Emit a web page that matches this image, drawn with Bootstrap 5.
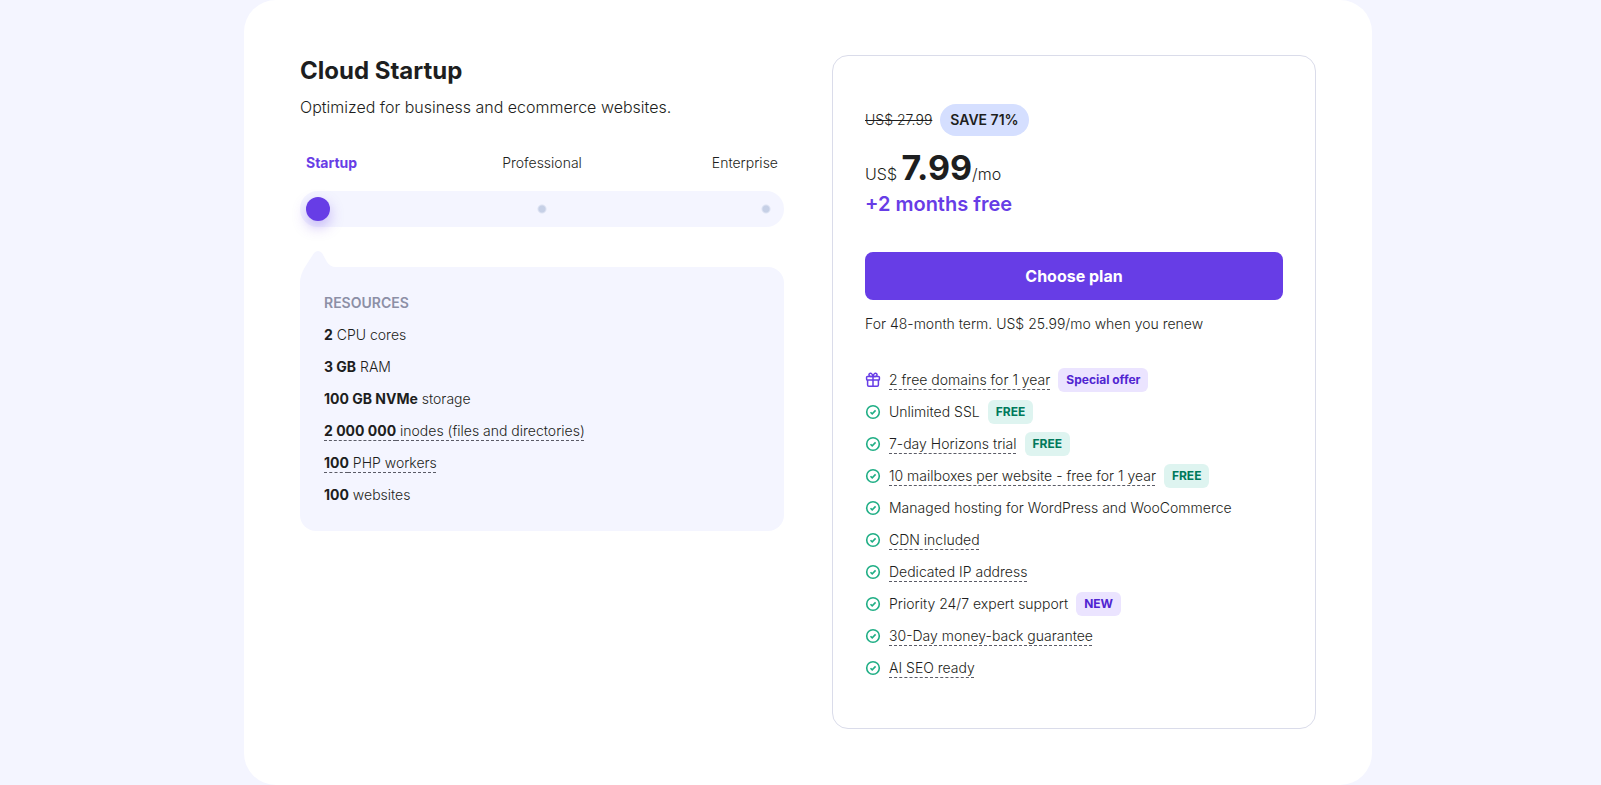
<!DOCTYPE html>
<html lang="en">
<head>
<meta charset="utf-8">
<meta name="viewport" content="width=device-width, initial-scale=1">
<title>Cloud Startup plan</title>
<link href="https://cdn.jsdelivr.net/npm/bootstrap@5.3.0/dist/css/bootstrap.min.css" rel="stylesheet">
<style>
  :root { --brand: #673de6; --ink: #1d1e20; --mist: #f4f5ff; --dot: #c6d0e6; }
  body { font-family: Inter, "Open Sans", sans-serif; font-size: 14px; font-weight: 300; line-height: 24px; color: var(--ink); background: var(--mist); }
  b { font-weight: 700; }
  .page-shell { padding-left: 15px; }
  .plan-panel { max-width: 1128px; min-height: 100vh; padding: 55px 56px 56px; border-radius: 32px; background: #fff; }
  .plan-title { font-size: 24px; line-height: 32px; }
  .fs-16 { font-size: 16px; }
  .text-brand { color: var(--brand); }

  .tiers { margin-top: 32px; padding: 0 6px; }
  .tiers > * { flex: 1; }
  .tier-range { -webkit-appearance: none; appearance: none; display: block; width: 100%; height: 36px; padding: 6px; margin: 0; border-radius: 18px;
    background: radial-gradient(circle, var(--dot) 3px, transparent 5px) center / 10px 10px no-repeat,
                radial-gradient(circle, var(--dot) 3px, transparent 5px) right 13px center / 10px 10px no-repeat, var(--mist); }
  .tier-range::-webkit-slider-thumb { -webkit-appearance: none; width: 24px; height: 24px; border-radius: 50%; background: var(--brand); box-shadow: 0 6px 14px rgba(103, 61, 230, .35); }
  .tier-range::-moz-range-thumb { width: 24px; height: 24px; border: 0; border-radius: 50%; background: var(--brand); }

  .resources { position: relative; margin-top: 40px; padding: 24px; border-radius: 16px; background: var(--mist); }
  .resources-tip { position: absolute; left: 0; top: -16px; }
  .resources h2 { font-size: 14px; line-height: 24px; color: #8c8fa6; }
  .hint { text-decoration: underline dashed 1px #5a5b66; text-underline-offset: 4px; text-decoration-skip-ink: none; cursor: help; }

  .price-card { padding: 48px 32px; border: 1px solid #dadcea; border-radius: 16px; }
  .save-pill { padding: 4px 10px; border-radius: 16px; background: #d5dfff; }
  .price-line { font-size: 16px; line-height: 24px; }
  .price-value { font-size: 34px; line-height: 48px; }
  .bonus { font-size: 20px; line-height: 24px; }
  .btn-plan { --bs-btn-color: #fff; --bs-btn-bg: #673de6; --bs-btn-hover-color: #fff; --bs-btn-hover-bg: #5025d1; --bs-btn-active-color: #fff; --bs-btn-active-bg: #5025d1;
    --bs-btn-font-size: 16px; --bs-btn-font-weight: 700; --bs-btn-line-height: 24px; --bs-btn-border-radius: 8px; --bs-btn-border-width: 0; --bs-btn-padding-y: 12px; margin-top: 36px; }
  .term { margin: 12px 0 32px; }
  .tag { padding: 0 8px; border-radius: 6px; font-size: 12px; }
  .tag-violet { color: #5025d1; background: #ebe4ff; }
  .tag-green { color: #00795b; background: #def4f0; }
</style>
</head>
<body>
<svg class="d-none" xmlns="http://www.w3.org/2000/svg">
  <symbol id="check" viewBox="0 0 16 16">
    <circle cx="8" cy="8" r="6.3" fill="none" stroke="#1fae85" stroke-width="1.6"/>
    <path d="M5.5 8.2 7.2 9.900 10.600 6.400" fill="none" stroke="#1fae85" stroke-width="1.6"/>
  </symbol>
  <symbol id="gift" viewBox="0 0 16 16">
    <g fill="none" stroke="#673de6" stroke-width="1.500" stroke-linejoin="round">
      <rect x="1.600" y="4.400" width="12.800" height="3.600" rx=".8"/>
      <path d="M2.600 8v5a1.200 1.200 0 0 0 1.200 1.200h8.400a1.200 1.200 0 0 0 1.200-1.200V8M8 4.400v9.800M8 4.400H5.400a1.600 1.600 0 1 1 1.300-2.700C7.500 2.400 8 4.400 8 4.400s.5-2 1.300-2.700a1.600 1.600 0 1 1 1.300 2.700z"/>
    </g>
  </symbol>
</svg>
<div class="page-shell">
  <main class="plan-panel mx-auto">
    <div class="row gx-5">
      <section class="col-6">
        <h1 class="plan-title fw-bold mb-2">Cloud Startup</h1>
        <p class="fs-16 mb-0">Optimized for business and ecommerce websites.</p>
        <div class="tiers d-flex mb-3">
          <span class="text-brand fw-bold">Startup</span>
          <span class="text-center">Professional</span>
          <span class="text-end">Enterprise</span>
        </div>
        <input class="tier-range" type="range" min="0" max="2" step="1" value="0" aria-label="Plan size">
        <div class="resources">
          <svg class="resources-tip" width="36" height="32" viewBox="0 0 36 32"><path d="M0 32Q0 24 5 16L14 2Q18-2 22 2L27 11Q30 16 36 16V32Z" fill="#f4f5ff"/></svg>
          <h2 class="fw-semibold mb-2">RESOURCES</h2>
          <ul class="list-unstyled d-grid gap-2 mb-0">
            <li><b>2</b> CPU cores</li>
            <li><b>3 GB</b> RAM</li>
            <li><b>100 GB NVMe</b> storage</li>
            <li><span class="hint"><b>2 000 000</b> inodes (files and directories)</span></li>
            <li><span class="hint"><b>100</b> PHP workers</span></li>
            <li><b>100</b> websites</li>
          </ul>
        </div>
      </section>
      <section class="col-6">
        <div class="price-card">
          <div class="d-flex align-items-center gap-2">
            <s>US$ 27.99</s>
            <span class="save-pill fw-semibold">SAVE 71%</span>
          </div>
          <div class="price-line mt-2">US$ <span class="price-value fw-bold">7.99</span>/mo</div>
          <div class="bonus text-brand fw-semibold">+2 months free</div>
          <button type="button" class="btn btn-plan w-100">Choose plan</button>
          <p class="term">For 48-month term. US$ 25.99/mo when you renew</p>
          <ul class="list-unstyled d-grid gap-2 mb-0">
            <li class="d-flex align-items-center gap-2"><svg width="16" height="16"><use href="#gift"/></svg><span class="hint">2 free domains for 1 year</span><span class="tag tag-violet fw-bold">Special offer</span></li>
            <li class="d-flex align-items-center gap-2"><svg width="16" height="16"><use href="#check"/></svg><span>Unlimited SSL</span><span class="tag tag-green fw-bold">FREE</span></li>
            <li class="d-flex align-items-center gap-2"><svg width="16" height="16"><use href="#check"/></svg><span class="hint">7-day Horizons trial</span><span class="tag tag-green fw-bold">FREE</span></li>
            <li class="d-flex align-items-center gap-2"><svg width="16" height="16"><use href="#check"/></svg><span class="hint">10 mailboxes per website - free for 1 year</span><span class="tag tag-green fw-bold">FREE</span></li>
            <li class="d-flex align-items-center gap-2"><svg width="16" height="16"><use href="#check"/></svg><span>Managed hosting for WordPress and WooCommerce</span></li>
            <li class="d-flex align-items-center gap-2"><svg width="16" height="16"><use href="#check"/></svg><span class="hint">CDN included</span></li>
            <li class="d-flex align-items-center gap-2"><svg width="16" height="16"><use href="#check"/></svg><span class="hint">Dedicated IP address</span></li>
            <li class="d-flex align-items-center gap-2"><svg width="16" height="16"><use href="#check"/></svg><span>Priority 24/7 expert support</span><span class="tag tag-violet fw-bold">NEW</span></li>
            <li class="d-flex align-items-center gap-2"><svg width="16" height="16"><use href="#check"/></svg><span class="hint">30-Day money-back guarantee</span></li>
            <li class="d-flex align-items-center gap-2"><svg width="16" height="16"><use href="#check"/></svg><span class="hint">AI SEO ready</span></li>
          </ul>
        </div>
      </section>
    </div>
  </main>
</div>
<script src="https://cdn.jsdelivr.net/npm/bootstrap@5.3.0/dist/js/bootstrap.bundle.min.js"></script>
</body>
</html>
